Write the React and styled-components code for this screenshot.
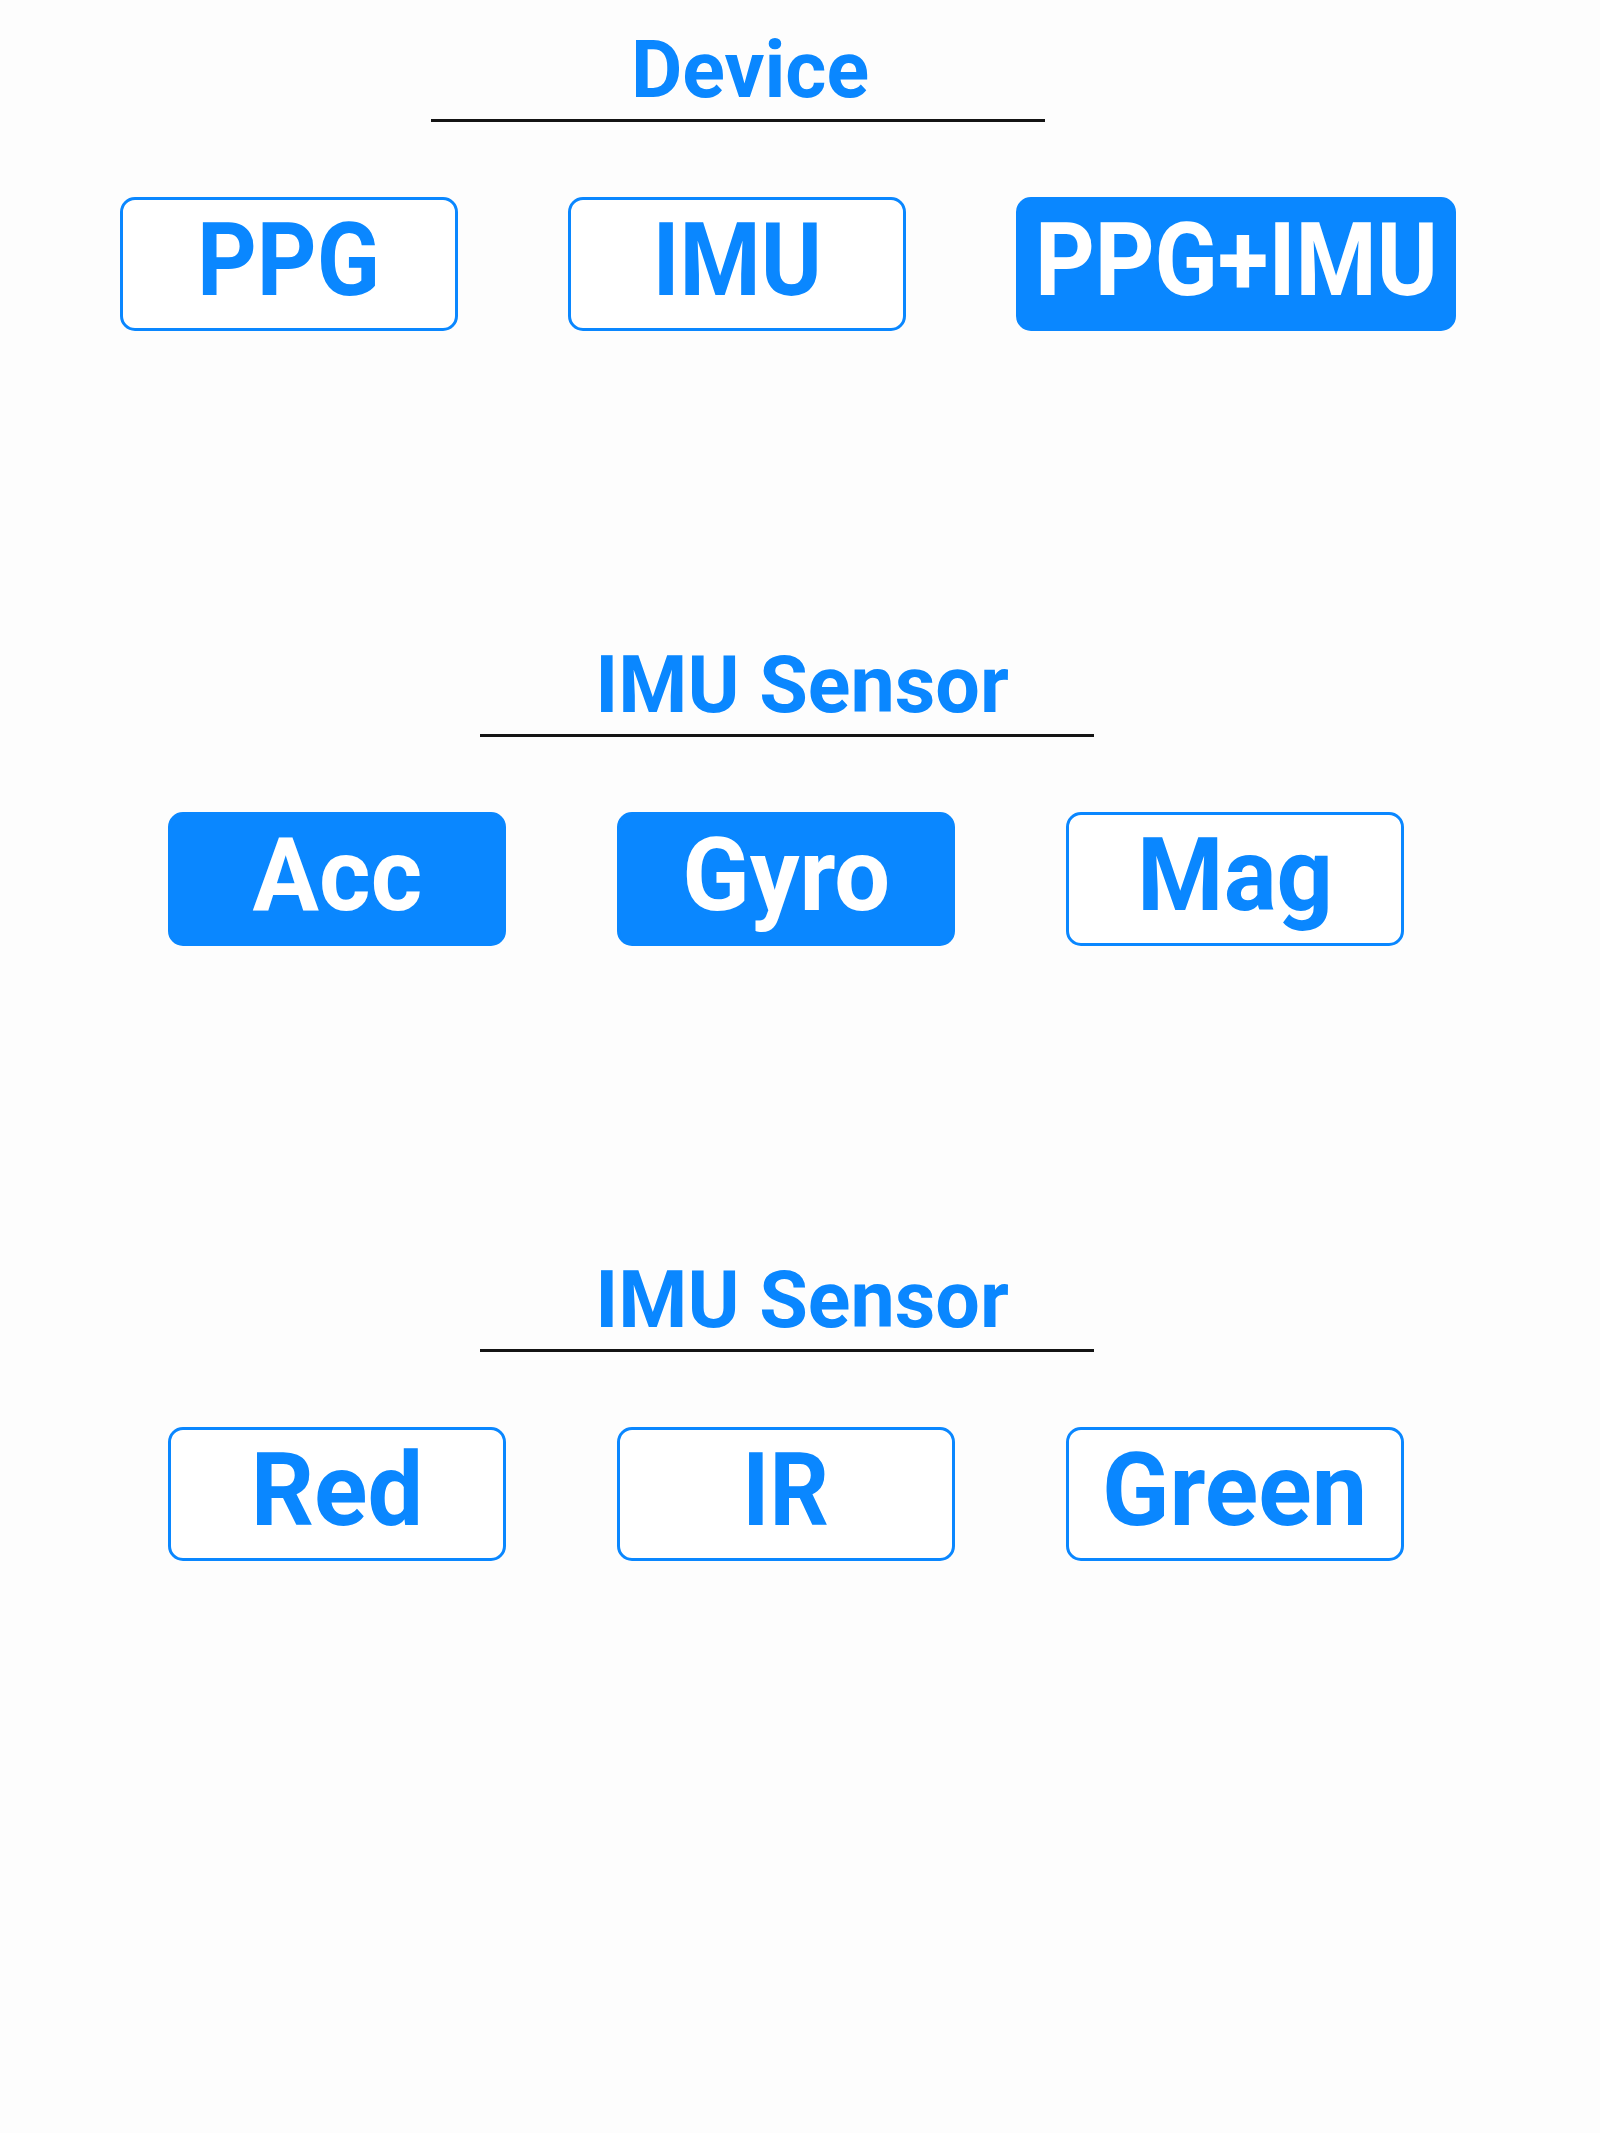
import React, { useState } from "react";
import styled, { createGlobalStyle } from "styled-components";

const GlobalStyle = createGlobalStyle`
  body {
    margin: 0;
    background: #fdfdfd;
    font-family: Roboto, "Liberation Sans", Arial, sans-serif;
  }
`;

const BLUE = "#0a87ff";

const Page = styled.div`
  min-height: 2133px;
  padding-top: 30px;
  box-sizing: border-box;
  display: flex;
  flex-direction: column;
  gap: 314px;
`;

const Section = styled.section`
  display: flex;
  flex-direction: column;
`;

const Heading = styled.div`
  width: 614px;
  margin-left: ${(p) => p.$left}px;
  padding: 0 0 9px ${(p) => p.$shift}px;
  box-sizing: border-box;
  border-bottom: 3px solid #141414;
  display: flex;
  justify-content: center;
`;

const HeadingText = styled.h2`
  margin: 0;
  font-size: 79px;
  line-height: 80px;
  font-weight: 700;
  color: ${BLUE};
  white-space: nowrap;
`;

const Row = styled.div`
  display: flex;
  gap: ${(p) => p.$gap}px;
  margin-top: 75px;
  padding-left: ${(p) => p.$left}px;
`;

const Toggle = styled.button`
  width: ${(p) => (p.$wide ? 440 : 338)}px;
  height: 134px;
  box-sizing: border-box;
  border: 3px solid ${BLUE};
  border-radius: 15px;
  background: ${(p) => (p.$on ? BLUE : "#ffffff")};
  color: ${(p) => (p.$on ? "#ffffff" : BLUE)};
  padding: 0 0 8px;
  display: flex;
  align-items: center;
  justify-content: center;
  cursor: pointer;
  font-family: inherit;
`;

const Label = styled.span`
  display: inline-block;
  font-size: 102px;
  line-height: 102px;
  font-weight: 700;
  white-space: nowrap;
  transform: scaleX(${(p) => p.$squeeze});
`;

const sectionsData = [
  {
    title: "Device",
    headLeft: 431,
    shift: 24,
    rowLeft: 120,
    gap: 110,
    items: [
      { name: "PPG" },
      { name: "IMU" },
      { name: "PPG+IMU", wide: true },
    ],
    selected: ["PPG+IMU"],
  },
  {
    title: "IMU Sensor",
    headLeft: 480,
    shift: 30,
    rowLeft: 168,
    gap: 111,
    items: [{ name: "Acc" }, { name: "Gyro" }, { name: "Mag" }],
    selected: ["Acc", "Gyro"],
  },
  {
    title: "IMU Sensor",
    headLeft: 480,
    shift: 30,
    rowLeft: 168,
    gap: 111,
    items: [{ name: "Red" }, { name: "IR" }, { name: "Green" }],
    selected: [],
  },
];

// uppercase-only labels read narrower in the original than lowercase ones
const squeezeFor = (name) => (name === name.toUpperCase() ? 0.91 : 0.97);

export default function App() {
  const [sections, setSections] = useState(sectionsData);

  const onToggle = (idx, name) => {
    setSections((prev) =>
      prev.map((s, i) =>
        i !== idx
          ? s
          : {
              ...s,
              selected: s.selected.includes(name)
                ? s.selected.filter((n) => n !== name)
                : [...s.selected, name],
            }
      )
    );
  };

  return (
    <>
      <GlobalStyle />
      <Page>
        {sections.map((s, idx) => (
          <Section key={idx}>
            <Heading $left={s.headLeft} $shift={s.shift}>
              <HeadingText>{s.title}</HeadingText>
            </Heading>
            <Row $left={s.rowLeft} $gap={s.gap}>
              {s.items.map((it) => (
                <Toggle
                  key={it.name}
                  $wide={it.wide}
                  $on={s.selected.includes(it.name)}
                  onClick={() => onToggle(idx, it.name)}
                >
                  <Label $squeeze={squeezeFor(it.name)}>{it.name}</Label>
                </Toggle>
              ))}
            </Row>
          </Section>
        ))}
      </Page>
    </>
  );
}
